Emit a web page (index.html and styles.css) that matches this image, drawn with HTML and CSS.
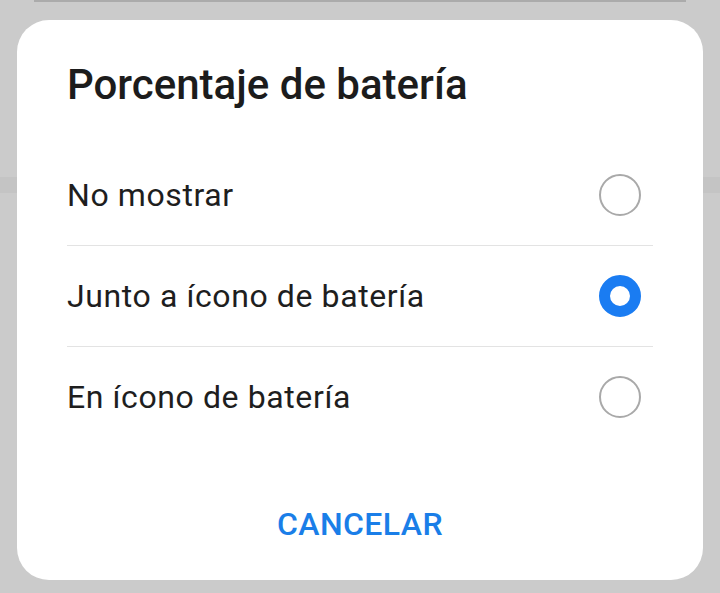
FILE: index.html
```html
<!DOCTYPE html>
<html lang="es">
<head>
  <meta charset="UTF-8">
  <meta name="viewport" content="width=device-width, initial-scale=1.0">
  <title>Porcentaje de batería</title>
  <link rel="stylesheet" href="styles.css">
</head>
<body>
  <div class="topline"></div>
  <div class="dialog">
    <h2 class="title">Porcentaje de batería</h2>
    <ul class="options">
      <li class="option">
        <span>No mostrar</span>
        <span class="radio"></span>
      </li>
      <li class="option">
        <span>Junto a ícono de batería</span>
        <span class="radio checked"></span>
      </li>
      <li class="option">
        <span>En ícono de batería</span>
        <span class="radio"></span>
      </li>
    </ul>
    <button class="cancel">CANCELAR</button>
  </div>
</body>
</html>
```

FILE: styles.css
```css
body {
  margin: 0;
  font-family: Roboto, "Noto Sans", Arial, sans-serif;
  background: linear-gradient(to bottom, #cbcbcb 0, #cbcbcb 177px, #c4c4c4 177px, #c4c4c4 193px, #cbcbcb 193px);
  height: 593px;
  overflow: hidden;
}
.topline {
  height: 2px;
  margin: 0 34px;
  background: #ababab;
}
.dialog {
  margin: 18px 17px 0;
  background: #fff;
  border-radius: 32px;
  padding: 40px 50px 36px;
  display: flex;
  flex-direction: column;
}
.title {
  margin: 0;
  font-size: 42px;
  line-height: 50px;
  font-weight: 500;
  color: #1c1c1c;
}
.options {
  list-style: none;
  margin: 35px 0 0;
  padding: 0;
}
.option {
  height: 100px;
  display: flex;
  align-items: center;
  justify-content: space-between;
  font-size: 32px;
  letter-spacing: 0.6px;
  color: #1e1e1e;
  border-bottom: 1px solid #e3e3e3;
}
.option:last-child {
  border-bottom: none;
}
.radio {
  width: 42px;
  height: 42px;
  box-sizing: border-box;
  border: 2.5px solid #a9a9a9;
  border-radius: 50%;
  margin-right: 12px;
}
.radio.checked {
  border: 11px solid #1a7cf2;
}
.cancel {
  margin: 57px auto 0;
  padding: 0;
  border: none;
  background: none;
  font-family: inherit;
  font-size: 32px;
  line-height: 40px;
  letter-spacing: 0.4px;
  font-weight: 500;
  color: #1a7ee8;
}
```
